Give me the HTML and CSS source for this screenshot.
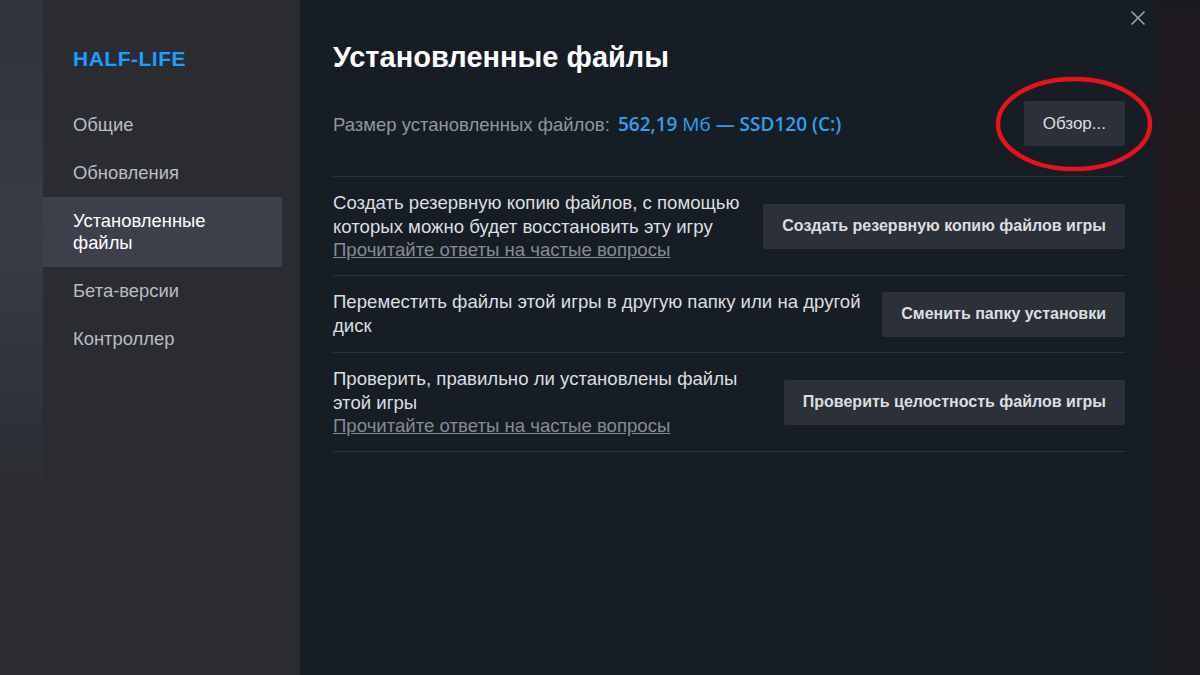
FILE: index.html
```html
<!DOCTYPE html>
<html lang="ru">

<head>
    <meta charset="UTF-8">
    <meta name="viewport" content="width=device-width, initial-scale=1.0">
    <title>Свойства: Half-Life</title>
    <link rel="stylesheet" href="styles.css">
</head>

<body>
    <div class="edge edge-left"></div>

    <aside class="sidebar">
        <div class="game-title">HALF-LIFE</div>
        <nav class="nav">
            <div class="nav-item">Общие</div>
            <div class="nav-item">Обновления</div>
            <div class="nav-item active">Установленные файлы</div>
            <div class="nav-item">Бета-версии</div>
            <div class="nav-item">Контроллер</div>
        </nav>
    </aside>

    <main class="content">
        <button class="close" aria-label="Закрыть">
            <svg width="16" height="16" viewBox="0 0 16 16">
                <path d="M1.5 1.5 L14.5 14.5 M14.5 1.5 L1.5 14.5" stroke="currentColor" stroke-width="1.6" fill="none" />
            </svg>
        </button>

        <h1>Установленные файлы</h1>

        <div class="size-row">
            <div class="size-text">
                Размер установленных файлов:
                <span class="size-value">562,19 <span class="unit">Мб</span> — SSD120 (C:)</span>
            </div>
            <div class="browse-wrap">
                <button class="btn">Обзор...</button>
                <!-- red annotation circle from the screenshot -->
                <svg class="mark" width="170" height="104" viewBox="0 0 170 104">
                    <ellipse cx="85" cy="52" rx="76" ry="45" fill="none" stroke="#e8121c" stroke-width="4.5" />
                </svg>
            </div>
        </div>

        <div class="option">
            <div class="option-text">
                Создать резервную копию файлов, с помощью<br>
                которых можно будет восстановить эту игру
                <a class="faq" href="#">Прочитайте ответы на частые вопросы</a>
            </div>
            <button class="btn btn-bold">Создать резервную копию файлов игры</button>
        </div>

        <div class="option">
            <div class="option-text">
                Переместить файлы этой игры в другую папку или на другой<br>
                диск
            </div>
            <button class="btn btn-bold">Сменить папку установки</button>
        </div>

        <div class="option">
            <div class="option-text">
                Проверить, правильно ли установлены файлы<br>
                этой игры
                <a class="faq" href="#">Прочитайте ответы на частые вопросы</a>
            </div>
            <button class="btn btn-bold">Проверить целостность файлов игры</button>
        </div>
    </main>

    <div class="edge edge-right"></div>
</body>

</html>
```

FILE: styles.css
```css
body {
    margin: 0;
    height: 675px;
    display: flex;
    font-family: "Liberation Sans", Arial, sans-serif;
    background-color: #1a1c21;
    overflow: hidden;
}

.edge {
    width: 43px;
    flex-shrink: 0;
}

.edge-left {
    background: linear-gradient(180deg, #30333b 0%, #383c47 35%, #2c2e34 70%, #2a2c31 100%);
}

.edge-right {
    width: 45px;
    background: linear-gradient(180deg, #1d1a1f 0%, #221a1f 30%, #1c1c21 70%, #1b1c20 100%);
}

.sidebar {
    width: 257px;
    flex-shrink: 0;
    background-color: #2a2c32;
    padding-top: 45px;
    box-sizing: border-box;
}

.game-title {
    margin-left: 30px;
    color: #1a9fff;
    font-size: 21px;
    font-weight: bold;
    letter-spacing: 0.5px;
    line-height: 28px;
}

.nav {
    margin-top: 28px;
}

.nav-item {
    margin-right: 18px;
    padding: 13px 30px;
    line-height: 22px;
    font-size: 18.4px;
    color: #b9bdc2;
}

.nav-item.active {
    background-color: #3d404b;
    color: #ffffff;
}

.content {
    position: relative;
    flex: 1;
    background-color: #171d25;
    padding: 40px 30px 0 33px;
}

.close {
    position: absolute;
    top: 9px;
    right: 8px;
    width: 18px;
    height: 18px;
    padding: 0;
    border: none;
    background: none;
    color: #9ea3a9;
    display: flex;
    align-items: center;
    justify-content: center;
}

h1 {
    margin: 0 0 27px;
    font-size: 29px;
    line-height: 34px;
    font-weight: bold;
    color: #ffffff;
}

.size-row {
    display: flex;
    align-items: center;
    justify-content: space-between;
    padding-bottom: 30px;
    border-bottom: 1px solid #2b313a;
}

.size-text {
    font-size: 18.5px;
    color: #8f969e;
}

.size-value {
    margin-left: 3px;
    font-family: "Open Sans", sans-serif;
    font-weight: 600;
    font-size: 19px;
    color: #2ea0f0;
}

.size-value .unit {
    font-weight: 400;
}

.browse-wrap {
    position: relative;
}

.mark {
    position: absolute;
    left: -35px;
    top: -29px;
    pointer-events: none;
}

.btn {
    height: 45px;
    padding: 0 19px;
    border: none;
    border-radius: 2px;
    background-color: #2c3039;
    color: #dcdee0;
    font-family: "Liberation Sans", Arial, sans-serif;
    font-size: 17px;
    white-space: nowrap;
    flex-shrink: 0;
}

.btn-bold {
    font-weight: bold;
    font-size: 16px;
}

.option {
    display: flex;
    align-items: center;
    justify-content: space-between;
    gap: 20px;
    padding: 14px 0;
    border-bottom: 1px solid #2b313a;
}

.option-text {
    font-size: 18.6px;
    line-height: 24px;
    color: #dcdee0;
}

.faq {
    display: block;
    line-height: 22px;
    color: #858b93;
    text-decoration: underline;
}
```
